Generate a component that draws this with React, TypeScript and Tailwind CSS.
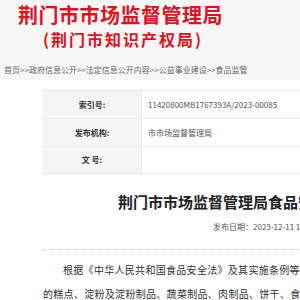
export default function App() {
  return (
    <div className="h-[300px] w-[300px] overflow-hidden bg-white font-['Noto_Sans_CJK_SC','Noto_Sans',sans-serif]">
      {/* Header */}
      <div className="h-[80px] bg-[#f7f7f7] pt-[3px]">
        <h1 className="whitespace-nowrap pl-[18px] text-[20px] font-bold leading-[24px] tracking-[0.5px] text-[#e60f1c]">
          荆门市市场监督管理局
        </h1>
        <h2 className="mt-[2px] whitespace-nowrap pl-[43px] text-[16px] font-bold leading-[20px] tracking-[2px] text-[#e60f1c]">
          (荆门市知识产权局)
        </h2>
        <p className="mt-[15px] whitespace-nowrap pl-[4px] text-[8px] leading-[12px] text-[#666]">
          首页&gt;&gt;政府信息公开&gt;&gt;法定信息公开内容&gt;&gt;公益事业建设&gt;&gt;食品监管
        </p>
      </div>

      {/* Info table */}
      <div className="ml-[43px] mt-[10px] w-[600px] border-t border-b border-[#ebebeb] text-[8px]">
        <div className="flex h-[28px] border-b border-[#ebebeb]">
          <div className="flex w-[99px] items-center justify-center border-r border-[#ebebeb] bg-[#f5f5f5] font-bold text-[#333]">
            索引号:
          </div>
          <div className="flex items-center pl-[6px] text-[#555]">11420800MB1767393A/2023-00085</div>
        </div>
        <div className="flex h-[28px] border-b border-[#ebebeb]">
          <div className="flex w-[99px] items-center justify-center border-r border-[#ebebeb] bg-[#f5f5f5] font-bold text-[#333]">
            发布机构:
          </div>
          <div className="flex items-center pl-[6px] text-[#555]">市市场监督管理局</div>
        </div>
        <div className="flex h-[26px]">
          <div className="flex w-[99px] items-center justify-center border-r border-[#ebebeb] bg-[#f5f5f5] font-bold text-[#333]">
            文 号:
          </div>
          <div className="flex items-center pl-[6px] text-[#555]"></div>
        </div>
      </div>

      {/* Article */}
      <div className="ml-[43px] w-[600px]">
        <h3 className="mt-[15px] whitespace-nowrap pl-[75px] text-[15px] font-bold leading-[26px] text-[#222]">
          荆门市市场监督管理局食品安全监督抽检信息公告
        </h3>
        <p className="mt-[6px] whitespace-nowrap pl-[170px] text-[8px] leading-[12px] text-[#555]">
          发布日期：2023-12-11 16:30
        </p>
        <div className="mt-[16px] border-t border-dotted border-[#ccc]" />
        <div className="mt-[8px] text-[10px] leading-[24px] tracking-[0.3px] text-[#333]">
          <p className="whitespace-nowrap indent-[20px]">
            根据《中华人民共和国食品安全法》及其实施条例等有关规定，
          </p>
          <p className="whitespace-nowrap">
            的糕点、淀粉及淀粉制品、蔬菜制品、肉制品、饼干、食用农产品等
          </p>
        </div>
      </div>
    </div>
  );
}
